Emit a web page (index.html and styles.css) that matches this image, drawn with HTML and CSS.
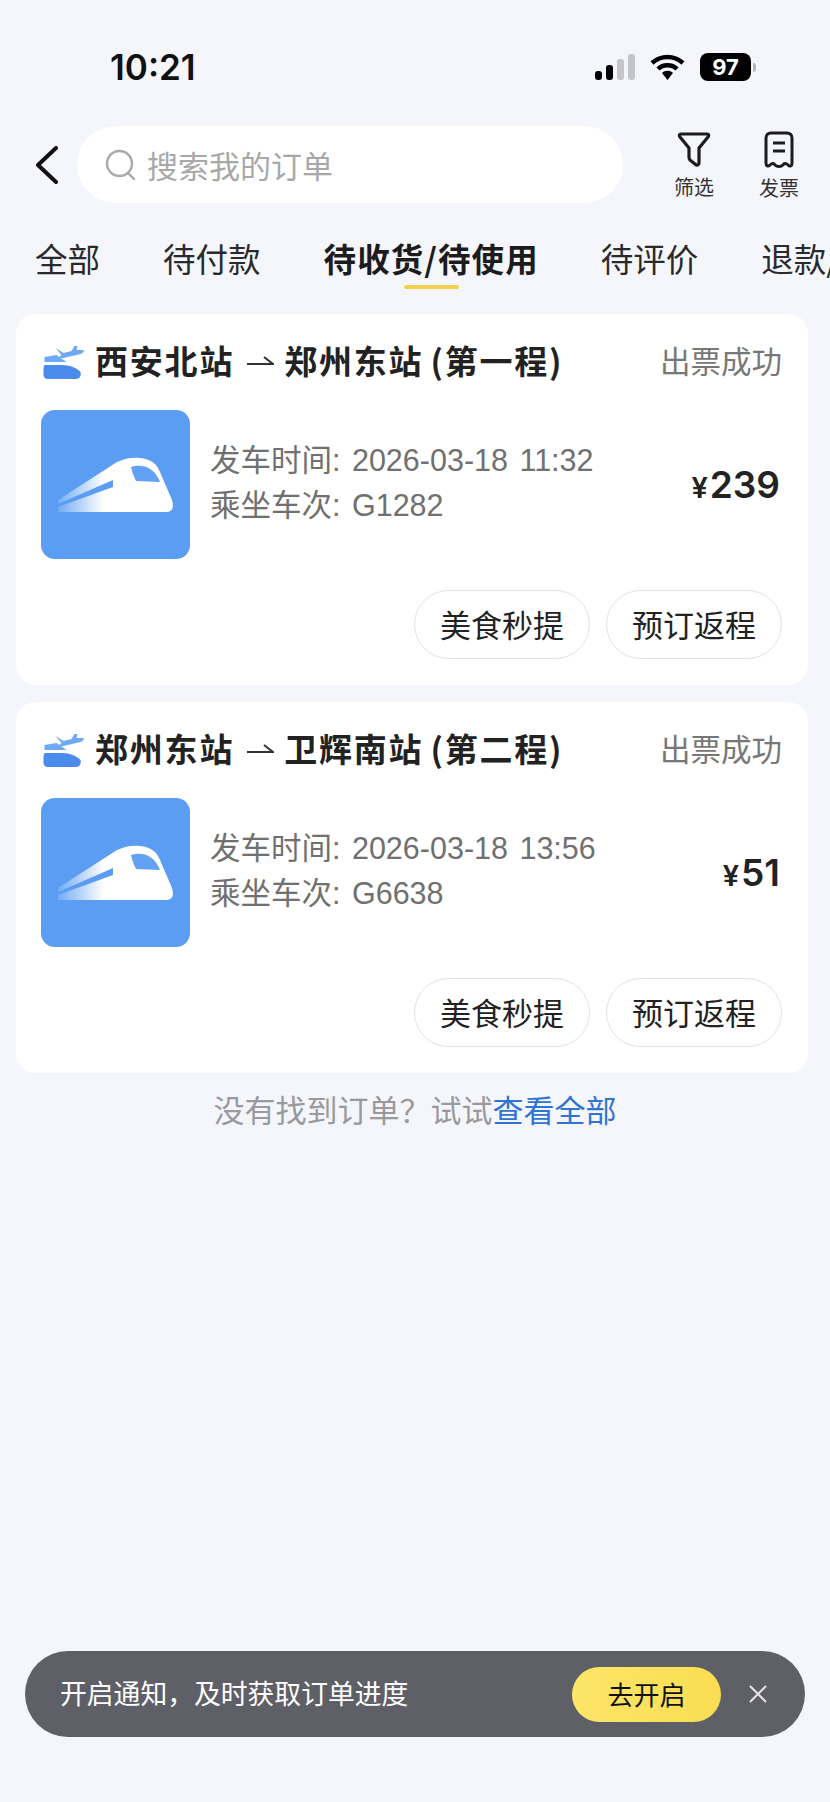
FILE: index.html
```html
<!DOCTYPE html>
<html lang="zh-CN">
<head>
    <meta charset="UTF-8">
    <meta name="viewport" content="width=device-width, initial-scale=1.0">
    <title>我的订单</title>
    <link rel="stylesheet" href="styles.css">
</head>
<body>
    <svg class="defs" width="0" height="0">
        <defs>
            <linearGradient id="trainFade" x1="0" y1="0" x2="1" y2="0">
                <stop offset="0" stop-color="#fff" stop-opacity="0.15"/>
                <stop offset="0.4" stop-color="#fff" stop-opacity="1"/>
            </linearGradient>
            <symbol id="train" viewBox="0 0 149 149">
                <rect width="149" height="149" rx="14" fill="#5a9df3"/>
                <path d="M17 90 L76 52 C84 48 92 47 99 48 C110 49 116 54 119 62 L131 90 C133 97 132 102 125 102 L17 102 L17 97 L72 77 L72 70 L17 94 Z" fill="url(#trainFade)"/>
                <path d="M90 57 C96 55 104 55 109 59 C114 62 117 67 119 72 L95 71 C93 67 91 62 90 57 Z" fill="#62a1f3"/>
            </symbol>
            <symbol id="plane" viewBox="0 0 41 33">
                <path d="M12 2 L20 7 L28 5 L31 0 L34 0 L33 4 L40 4 C41 6 39 7 37 8 L20 12 L15 12 L18 9 Z" fill="#6fa8f4"/>
                <path d="M1 11 L13 9 L23 16 L1 16 Z" fill="#6fa8f4"/>
                <path d="M1 19 L18 19 C27 19 33 22 37 26 C38 30 36 33 32 33 L4 33 C2 33 0 31 0 29 L0 22 Z" fill="#4b8bec"/>
            </symbol>
            <symbol id="arrow" viewBox="0 0 27 12">
                <path d="M0 10 H26 L17 3" fill="none" stroke="#333" stroke-width="2"/>
            </symbol>
        </defs>
    </svg>

    <div class="page">
        <div class="status-bar">
            <span class="time">10:21</span>
            <div class="status-icons">
                <svg class="signal" width="40" height="26" viewBox="0 0 40 26">
                    <rect x="0" y="17" width="7" height="9" rx="3" fill="#000"/>
                    <rect x="11" y="11" width="7" height="15" rx="3" fill="#000"/>
                    <rect x="22" y="5" width="7" height="21" rx="3" fill="#c4c5c9"/>
                    <rect x="33" y="0" width="7" height="26" rx="3" fill="#c4c5c9"/>
                </svg>
                <svg class="wifi" width="35" height="26" viewBox="0 0 35 26">
                    <path d="M2 9 C11 1 24 1 33 9" fill="none" stroke="#000" stroke-width="4.5"/>
                    <path d="M8 15 C13 10 22 10 27 15" fill="none" stroke="#000" stroke-width="4.5"/>
                    <path d="M12 19 C15 16 20 16 23 19 L17.5 26 Z" fill="#000"/>
                </svg>
                <div class="battery"><span>97</span></div>
                <div class="battery-tip"></div>
            </div>
        </div>

        <div class="toolbar">
            <svg class="back" width="24" height="38" viewBox="0 0 24 38">
                <path d="M21 2 L3 19 L21 36" fill="none" stroke="#111" stroke-width="4" stroke-linecap="round" stroke-linejoin="round"/>
            </svg>
            <div class="search">
                <svg width="32" height="32" viewBox="0 0 32 32">
                    <circle cx="14.5" cy="14.5" r="12.5" fill="none" stroke="#a9a9a9" stroke-width="2.4"/>
                    <path d="M23 24 L29 30" fill="none" stroke="#a9a9a9" stroke-width="2.4" stroke-linecap="round"/>
                </svg>
                <span>搜索我的订单</span>
            </div>
            <div class="tool tool-filter">
                <svg width="34" height="36" viewBox="0 0 34 36">
                    <path d="M4 3 H30 C32 3 32 5 31 6 L22 17 V32 C22 34 20 35 18 33 L13 29 C12 28 12 27 12 26 V17 L3 6 C2 5 2 3 4 3 Z" fill="none" stroke="#1c1c1e" stroke-width="3.2" stroke-linejoin="round"/>
                </svg>
                <span>筛选</span>
            </div>
            <div class="tool tool-invoice">
                <svg width="30" height="37" viewBox="0 0 30 37">
                    <path d="M2 32 V7 C2 4 4 2 7 2 H23 C26 2 28 4 28 7 V32 C28 35 26 36 24 34 C22 32 20 32 19 34 C17 36 13 36 11 34 C10 32 8 32 6 34 C4 36 2 35 2 32 Z" fill="none" stroke="#1c1c1e" stroke-width="3" stroke-linejoin="round"/>
                    <path d="M9 12 H21 M9 20 H21" fill="none" stroke="#1c1c1e" stroke-width="3"/>
                </svg>
                <span>发票</span>
            </div>
        </div>

        <div class="tabs">
            <span class="tab">全部</span>
            <span class="tab">待付款</span>
            <span class="tab active">待收货/待使用</span>
            <span class="tab">待评价</span>
            <span class="tab">退款/售后</span>
        </div>

        <div class="orders">
            <div class="card">
                <div class="card-head">
                    <svg class="plane" width="42" height="33"><use href="#plane"/></svg>
                    <div class="route">
                        <span>西安北站</span>
                        <svg class="arrow" width="27" height="12"><use href="#arrow"/></svg>
                        <span>郑州东站</span>
                        <span class="leg">(第一程)</span>
                    </div>
                    <span class="state">出票成功</span>
                </div>
                <div class="card-body">
                    <svg class="thumb" width="149" height="149"><use href="#train"/></svg>
                    <div class="info">
                        <div>发车时间: 2026-03-18 11:32</div>
                        <div>乘坐车次: G1282</div>
                    </div>
                    <div class="price"><small>¥</small>239</div>
                </div>
                <div class="actions">
                    <span class="btn">美食秒提</span>
                    <span class="btn">预订返程</span>
                </div>
            </div>

            <div class="card">
                <div class="card-head">
                    <svg class="plane" width="42" height="33"><use href="#plane"/></svg>
                    <div class="route">
                        <span>郑州东站</span>
                        <svg class="arrow" width="27" height="12"><use href="#arrow"/></svg>
                        <span>卫辉南站</span>
                        <span class="leg">(第二程)</span>
                    </div>
                    <span class="state">出票成功</span>
                </div>
                <div class="card-body">
                    <svg class="thumb" width="149" height="149"><use href="#train"/></svg>
                    <div class="info">
                        <div>发车时间: 2026-03-18 13:56</div>
                        <div>乘坐车次: G6638</div>
                    </div>
                    <div class="price"><small>¥</small>51</div>
                </div>
                <div class="actions">
                    <span class="btn">美食秒提</span>
                    <span class="btn">预订返程</span>
                </div>
            </div>
        </div>

        <p class="hint">没有找到订单&#65311;试试<a href="#">查看全部</a></p>

        <div class="notice">
            <span class="notice-text">开启通知&#65292;及时获取订单进度</span>
            <span class="notice-btn">去开启</span>
            <svg class="notice-close" width="20" height="20" viewBox="0 0 20 20">
                <path d="M2 2 L18 18 M18 2 L2 18" fill="none" stroke="#e4e4e8" stroke-width="2"/>
            </svg>
        </div>
    </div>
</body>
</html>
```

FILE: styles.css
```css
body {
    margin: 0;
    padding: 0;
    background-color: #f4f6fb;
    font-family: "Noto Sans CJK SC", "Noto Sans", sans-serif;
    color: #1c1c1e;
}
.defs {
    position: absolute;
}
.page {
    position: relative;
    width: 830px;
    height: 1802px;
    overflow: hidden;
}
.status-bar {
    display: flex;
    justify-content: space-between;
    align-items: center;
    height: 126px;
    padding: 8px 74px 0 110px;
    box-sizing: border-box;
}
.time {
    font-family: Inter, sans-serif;
    font-size: 35px;
    font-weight: 600;
    color: #111;
}
.status-icons {
    display: flex;
    align-items: center;
}
.wifi {
    margin-left: 15px;
}
.battery {
    width: 51px;
    height: 28px;
    margin-left: 15px;
    background-color: #000;
    border-radius: 8px;
    display: flex;
    align-items: center;
    justify-content: center;
    color: #fff;
    font-family: Inter, sans-serif;
    font-size: 22px;
    font-weight: 700;
}
.battery-tip {
    width: 3px;
    height: 9px;
    margin-left: 2px;
    background-color: #b5b6ba;
    border-radius: 0 3px 3px 0;
}
.toolbar {
    display: flex;
    align-items: center;
    height: 77px;
    padding-left: 35px;
}
.search {
    display: flex;
    align-items: center;
    gap: 10px;
    width: 546px;
    height: 77px;
    margin-left: 18px;
    padding-left: 28px;
    box-sizing: border-box;
    background-color: #fff;
    border-radius: 39px;
    font-size: 31px;
    color: #a8a8a8;
}
.tool {
    position: absolute;
    top: 131px;
    display: flex;
    flex-direction: column;
    align-items: center;
    width: 60px;
    font-size: 20px;
    line-height: 28px;
    color: #333;
}
.tool-filter {
    left: 664px;
}
.tool-invoice {
    left: 749px;
}
.tool span {
    margin-top: 6px;
}
.tabs {
    display: flex;
    align-items: flex-start;
    gap: 63px;
    height: 111px;
    padding: 32px 0 0 35px;
    box-sizing: border-box;
    font-size: 32.5px;
    line-height: 46px;
    white-space: nowrap;
    color: #2a2a2c;
}
.tab.active {
    position: relative;
    margin-right: -1px;
    font-weight: 700;
    letter-spacing: 1.1px;
    color: #1c1c1e;
}
.tab.active::after {
    content: "";
    position: absolute;
    left: 80px;
    bottom: -8px;
    width: 55px;
    height: 4px;
    background-color: #f5cf4f;
    border-radius: 2px;
}
.orders {
    display: flex;
    flex-direction: column;
    gap: 17px;
    margin: 0 22px 0 16px;
}
.card {
    height: 371px;
    padding: 0 26px 0 25px;
    box-sizing: border-box;
    background-color: #fff;
    border-radius: 20px;
}
.card-head {
    display: flex;
    align-items: center;
    height: 96px;
    padding-bottom: 5px;
    box-sizing: border-box;
}
.plane {
    flex: none;
    margin: 6px 10px 0 2px;
}
.route {
    display: flex;
    align-items: center;
    gap: 10px;
    flex: 1;
    font-size: 33px;
    font-weight: 700;
    letter-spacing: 1.8px;
    color: #222;
}
.leg {
    margin-left: -3px;
}
.arrow {
    margin: 0 0 0 3px;
}
.state {
    font-size: 30.5px;
    color: #777;
}
.card-body {
    display: flex;
    align-items: center;
}
.thumb {
    flex: none;
}
.info {
    flex: 1;
    margin: 0 0 4px 20px;
    font-family: "Liberation Sans", "Noto Sans CJK SC", sans-serif;
    font-size: 30.5px;
    line-height: 45px;
    word-spacing: 3px;
    color: #707070;
}
.price {
    margin-right: 2px;
    font-family: Inter, sans-serif;
    font-size: 37px;
    font-weight: 600;
    color: #222;
}
.price small {
    font-size: 29px;
    margin-right: 2px;
}
.actions {
    display: flex;
    justify-content: flex-end;
    gap: 16px;
    margin-top: 31px;
}
.btn {
    display: flex;
    align-items: center;
    justify-content: center;
    width: 176px;
    height: 69px;
    padding-bottom: 3px;
    box-sizing: border-box;
    border: 1px solid #e2e2e4;
    border-radius: 35px;
    font-size: 31px;
    color: #222;
}
.hint {
    margin: 11px 0 0;
    text-align: center;
    font-size: 31px;
    line-height: 50px;
    color: #9a9a9e;
}
.hint a {
    color: #2f74d0;
    text-decoration: none;
}
.notice {
    position: absolute;
    left: 25px;
    top: 1651px;
    display: flex;
    align-items: center;
    width: 780px;
    height: 86px;
    padding: 0 37px 0 35px;
    box-sizing: border-box;
    background-color: #5f5f67;
    border-radius: 43px;
}
.notice-text {
    flex: 1;
    padding-bottom: 3px;
    font-size: 26.8px;
    color: #fff;
}
.notice-btn {
    display: flex;
    align-items: center;
    justify-content: center;
    width: 149px;
    height: 55px;
    padding-bottom: 2px;
    box-sizing: border-box;
    background: linear-gradient(90deg, #fce668, #fadd52);
    border-radius: 28px;
    font-size: 26px;
    color: #111;
}
.notice-close {
    margin-left: 27px;
}
```
